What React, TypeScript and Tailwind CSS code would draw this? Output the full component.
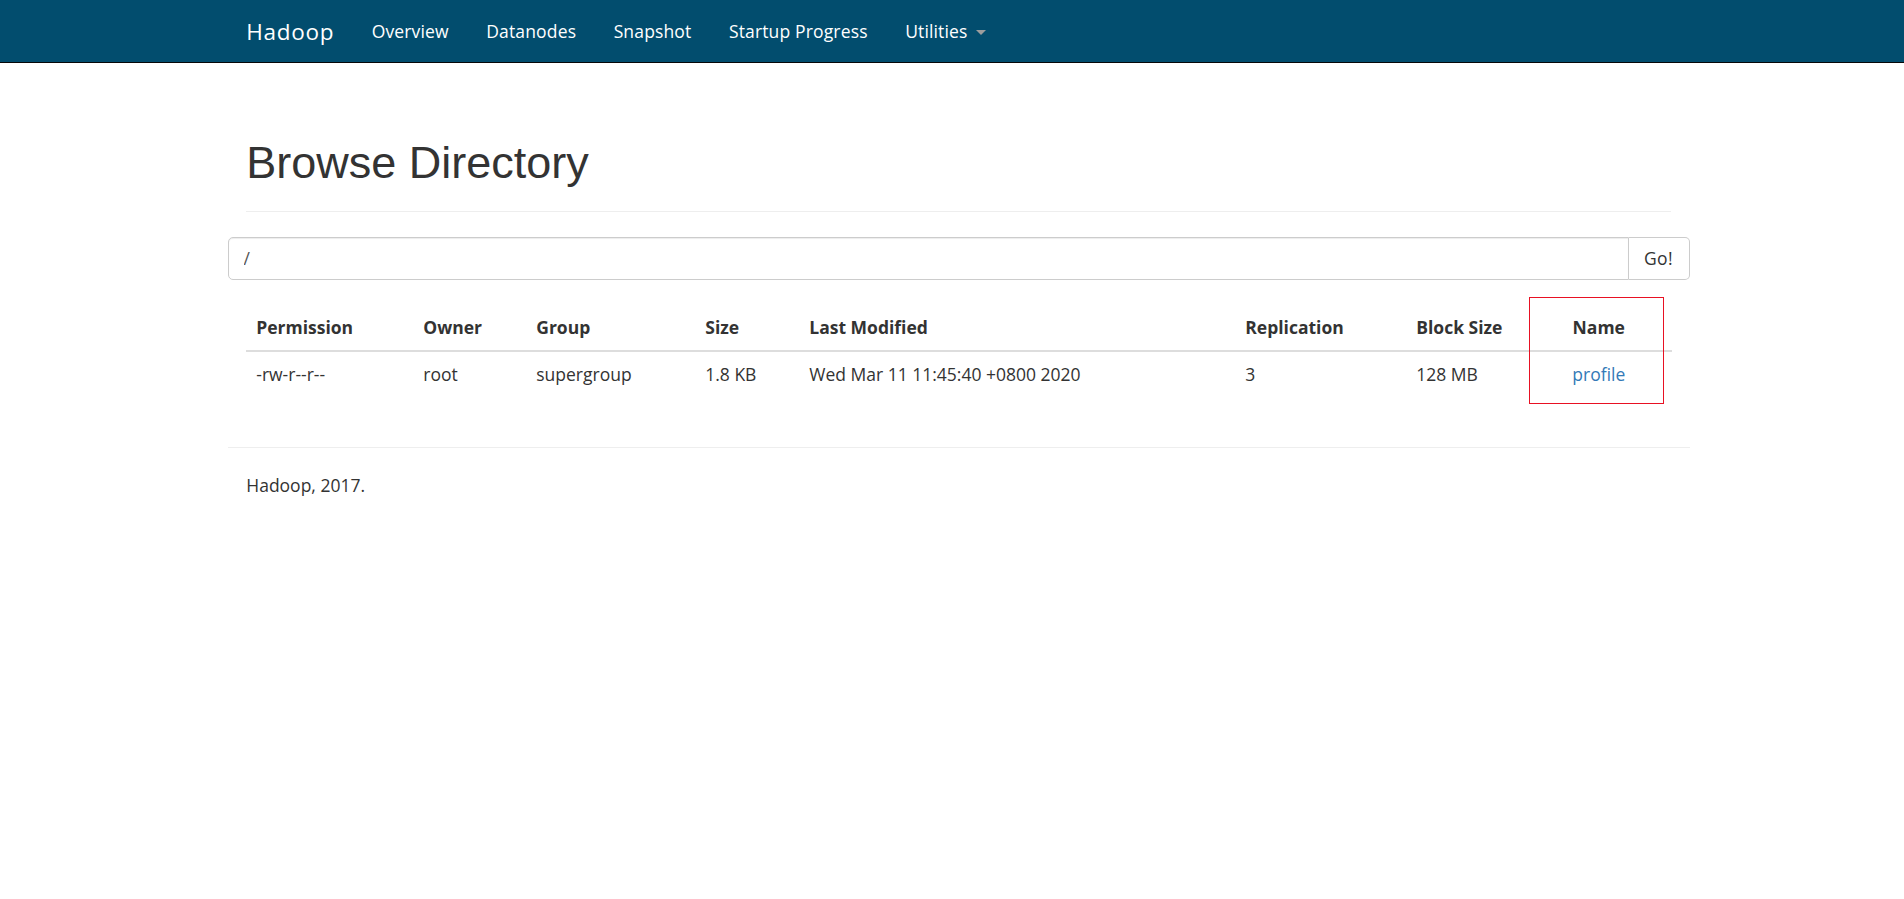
const NAV_LINKS = ["Overview", "Datanodes", "Snapshot", "Startup Progress"];

const COLUMNS = [
  { label: "Permission", width: "w-[167px]", align: "text-left" },
  { label: "Owner", width: "w-[113px]", align: "text-left" },
  { label: "Group", width: "w-[169px]", align: "text-left" },
  { label: "Size", width: "w-[104px]", align: "text-left" },
  { label: "Last Modified", width: "w-[436px]", align: "text-left" },
  { label: "Replication", width: "w-[171px]", align: "text-left" },
  { label: "Block Size", width: "w-[119px]", align: "text-left" },
  { label: "Name", width: "w-[147px]", align: "text-center" },
];

const ROWS = [
  [
    "-rw-r--r--",
    "root",
    "supergroup",
    "1.8 KB",
    "Wed Mar 11 11:45:40 +0800 2020",
    "3",
    "128 MB",
    "profile",
  ],
];

const bodyFont = "font-['Open_Sans','Noto_Sans',sans-serif]";

function Navbar() {
  return (
    <nav className="h-[63px] border-b border-[#080808] bg-[#024d6e]">
      <div className="flex justify-center pl-[13px]">
        <div className="flex w-[1462px] items-start">
          <a className="px-[18.75px] py-[18.75px] text-[22.5px] leading-[25px] tracking-[0.7px] text-white">
            Hadoop
          </a>
          <ul className="flex">
            {NAV_LINKS.map((link) => (
              <li key={link}>
                <a className="block px-[18.75px] py-[18.75px] text-[17.5px] leading-[25px] tracking-[0.15px] text-white">
                  {link}
                </a>
              </li>
            ))}
            <li>
              <a className="flex items-center px-[18.75px] py-[18.75px] text-[17.5px] leading-[25px] tracking-[0.15px] text-white">
                Utilities
                <span className="ml-[8px] mt-[2px] inline-block h-0 w-0 border-x-[5px] border-t-[5px] border-x-transparent border-t-[#9d9d9d]" />
              </a>
            </li>
          </ul>
        </div>
      </div>
    </nav>
  );
}

function FileTable() {
  return (
    <table className="mt-[25px] w-[1426px] table-fixed border-collapse text-[17.5px] leading-[25px] text-[#333]">
      <thead>
        <tr>
          {COLUMNS.map((col) => (
            <th
              key={col.label}
              className={`${col.width} ${col.align} border-b-2 border-[#ddd] p-[10px] font-bold`}
            >
              {col.label}
            </th>
          ))}
        </tr>
      </thead>
      <tbody>
        {ROWS.map((row, rowIndex) => (
          <tr key={rowIndex}>
            {row.map((cell, cellIndex) => (
              <td
                key={cellIndex}
                className={`${COLUMNS[cellIndex].align} border-t border-[#ddd] p-[10px] whitespace-nowrap`}
              >
                {cellIndex === row.length - 1 ? (
                  <a className="text-[#337ab7]">{cell}</a>
                ) : (
                  cell
                )}
              </td>
            ))}
          </tr>
        ))}
      </tbody>
    </table>
  );
}

export default function App() {
  return (
    <div className={`relative min-h-[899px] bg-white text-[#333] ${bodyFont}`}>
      <Navbar />

      <div className="flex justify-center pl-[13px]">
        <div className="w-[1462px] px-[18.75px]">
          <div className="mt-[75px] border-b border-[#eee] pb-[11px]">
            <h1 className="mb-[12.5px] font-['Liberation_Sans',Arial,sans-serif] text-[45px] font-normal leading-[49.5px] text-[#333]">
              Browse Directory
            </h1>
          </div>

          <div className="-mx-[18.75px] mt-[25px]">
            <form className="flex h-[42.5px]" onSubmit={(e) => e.preventDefault()}>
              <input
                className="h-full flex-1 rounded-l-[5px] border border-[#ccc] px-[15px] text-[17.5px] text-[#555] shadow-[inset_0_1px_1px_rgba(0,0,0,0.075)] outline-none"
                defaultValue="/"
              />
              <button
                type="submit"
                className="h-full w-[61px] rounded-r-[5px] border border-l-0 border-[#ccc] bg-white text-[17.5px] tracking-[0.4px] text-[#333]"
              >
                Go!
              </button>
            </form>
          </div>

          <div className="relative">
            <FileTable />
            <div className="pointer-events-none absolute left-[1283px] top-[-8px] h-[107px] w-[135px] border border-[#e81123]" />
          </div>

          <div className="-mx-[18.75px] mt-[50px] border-t border-[#eee]" />
          <p className="mt-[25px] text-[17.5px] leading-[25px]">Hadoop, 2017.</p>
        </div>
      </div>
    </div>
  );
}
